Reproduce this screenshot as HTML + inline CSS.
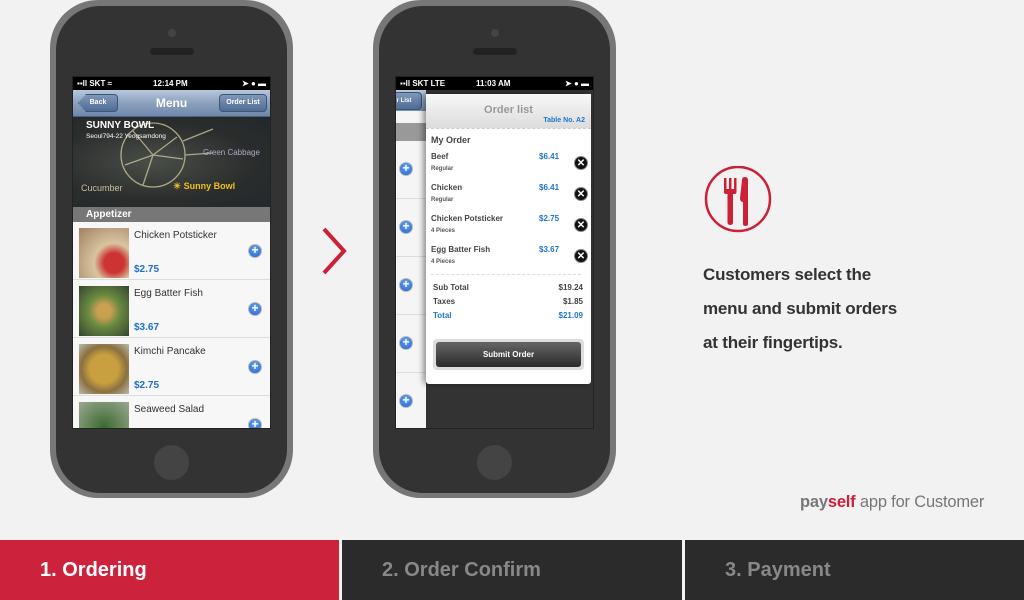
<!DOCTYPE html>
<html><head><meta charset="utf-8"><style>
*{margin:0;padding:0;box-sizing:border-box}
body{width:1024px;height:600px;background:#f2f2f2;position:relative;overflow:hidden;font-family:"Liberation Sans",sans-serif}
.abs{position:absolute}
.phone{position:absolute;top:0;width:243px;height:498px;background:#777;border-radius:48px}
.phone .in{position:absolute;left:6px;top:-6px;right:6px;bottom:5px;background:#333;border-radius:44px}
.cam{position:absolute;width:8px;height:8px;border-radius:50%;background:#444;left:118px;top:29px}
.spk{position:absolute;width:44px;height:7px;border-radius:4px;background:#222;left:100px;top:48px}
.home{position:absolute;width:35px;height:35px;border-radius:50%;background:#444;left:104px;top:445px}
.screen{position:absolute;left:22px;top:76px;width:199px;height:353px;background:#fff;overflow:hidden;border:1px solid #222}
.sb{position:absolute;left:0;top:0;width:100%;height:13px;background:#000;color:#fff;font-size:8px;font-weight:bold;line-height:13px}
.nav{position:absolute;left:0;top:13px;width:100%;height:27px;background:linear-gradient(#b7c7dc,#8ba0bd 50%,#6f88aa);border-bottom:1px solid #4c5f7c}
.btn{position:absolute;top:4px;height:18px;border-radius:4px;background:linear-gradient(#7f97b8,#4f6c94);border:1px solid #3d5476;color:#fff;font-size:7px;font-weight:bold;text-align:center;line-height:16px}
.row{position:absolute;left:0;width:100%;height:58px;border-bottom:1px solid #ddd;background:#f7f7f7}
.row .img{position:absolute;left:6px;top:6px;width:50px;height:50px}
.row .t{position:absolute;left:61px;top:8px;font-size:10px;color:#333}
.row .p{position:absolute;left:61px;top:42px;font-size:10px;color:#1e6fcf;font-weight:bold}
.plus{position:absolute;width:14px;height:14px;border-radius:50%;background:radial-gradient(circle at 50% 35%,#6aa6f0,#1f62d0);border:1px solid #bbb;color:#fff;font-size:12px;line-height:11px;text-align:center;font-weight:bold}
.x{position:absolute;left:148px;width:14px;height:14px;border-radius:50%;background:#111;color:#fff;font-size:10px;line-height:14px;text-align:center;font-weight:bold;border:1px solid #888}
.it{position:absolute;left:5px;font-size:8px;color:#444;font-weight:bold}
.sub{position:absolute;left:5px;font-size:6px;color:#555;font-weight:bold}
.pr{position:absolute;left:113px;font-size:8px;color:#1e74d0;font-weight:bold}
.tab{position:absolute;top:540px;height:60px;font-size:20px;font-weight:bold;line-height:60px;padding-left:40px}
</style></head><body>

<div class="phone" style="left:50px">
<div class="in" style="top:6px"></div>
<div class="cam"></div><div class="spk"></div><div class="home"></div>
<div class="screen">
 <div class="sb"><span style="position:absolute;left:4px">▪▪ll SKT ≈</span><span style="position:absolute;left:80px">12:14 PM</span><span style="position:absolute;right:4px">➤ ● ▬</span></div>
 <div class="nav">
  <div class="btn" style="left:5px;width:40px;clip-path:polygon(8px 0,100% 0,100% 100%,8px 100%,0 50%)">Back</div>
  <div style="position:absolute;left:0;width:100%;text-align:center;color:#fff;font-size:12px;font-weight:bold;line-height:26px">Menu</div>
  <div class="btn" style="right:3px;width:48px">Order List</div>
 </div>
 <div class="abs" style="left:0;top:40px;width:199px;height:90px;background:radial-gradient(ellipse at 40% 50%,#4a4e48,#2a2d2c 60%,#22282b)">
  <svg width="199" height="90" class="abs" style="left:0;top:0"><g fill="none" stroke="#c8c29a" stroke-width="1.3" opacity=".8"><circle cx="80" cy="38" r="32"/><path d="M80 38L60 14M80 38L104 20M80 38L110 42M80 38L70 68M80 38L52 48"/><path d="M110 24L140 12M112 38L140 36"/></g>
  <text x="100" y="72" fill="#f0c020" font-size="9" font-weight="bold" font-family="Liberation Sans">☀ Sunny Bowl</text>
  <text x="8" y="74" fill="#c8c29a" font-size="9" font-family="Liberation Sans">Cucumber</text>
  <text x="130" y="38" fill="#aac" font-size="8" font-family="Liberation Sans">Green Cabbage</text></svg>
  <div class="abs" style="left:13px;top:3px;color:#fff;font-size:10px;font-weight:bold">SUNNY BOWL</div>
  <div class="abs" style="left:13px;top:16px;color:#fff;font-size:6.5px">Seoul794-22 Yeogsamdong</div>
 </div>
 <div class="abs" style="left:0;top:130px;width:100%;height:15px;background:#777;color:#fff;font-size:10px;font-weight:bold;line-height:15px;padding-left:13px">Appetizer</div>
 <div class="row" style="top:145px"><div class="img" style="background:radial-gradient(circle at 70% 70%,#c33 20%,#d8c5a0 40%,#a08060)"></div><div class="t">Chicken Potsticker</div><div class="p">$2.75</div><div class="plus" style="left:175px;top:22px">+</div></div>
 <div class="row" style="top:203px"><div class="img" style="background:radial-gradient(circle,#c9a050 20%,#6a8a40 45%,#354530)"></div><div class="t">Egg Batter Fish</div><div class="p">$3.67</div><div class="plus" style="left:175px;top:22px">+</div></div>
 <div class="row" style="top:261px"><div class="img" style="background:radial-gradient(circle,#c9a040 40%,#8a7040 65%,#bba)"></div><div class="t">Kimchi Pancake</div><div class="p">$2.75</div><div class="plus" style="left:175px;top:22px">+</div></div>
 <div class="row" style="top:319px"><div class="img" style="background:radial-gradient(circle,#3a6a30,#9aa890)"></div><div class="t">Seaweed Salad</div><div class="plus" style="left:175px;top:22px">+</div></div>
</div>
</div>

<svg class="abs" style="left:318px;top:226px" width="32" height="50"><path d="M6 3L26 25L6 47" fill="none" stroke="#cc2038" stroke-width="4"/></svg>

<div class="phone" style="left:373px">
<div class="in" style="top:6px"></div>
<div class="cam"></div><div class="spk"></div><div class="home"></div>
<div class="screen" style="background:#333">
 <div class="sb"><span style="position:absolute;left:4px">▪▪ll SKT LTE</span><span style="position:absolute;left:80px">11:03 AM</span><span style="position:absolute;right:4px">➤ ● ▬</span></div>
 <div class="abs" style="left:0;top:13px;width:30px;height:340px;background:#f5f5f5">
  <div class="abs" style="left:0;top:0;width:30px;height:21px;background:linear-gradient(#b7c7dc,#7890b0)"><div class="btn" style="left:-10px;top:2px;width:36px;font-size:6px">r List</div></div>
  <div class="abs" style="left:0;top:33px;width:30px;height:18px;background:#999"></div>
  <div class="plus" style="left:3px;top:72px">+</div><div class="abs" style="left:0;top:108px;width:30px;border-top:1px solid #ddd"></div>
  <div class="plus" style="left:3px;top:130px">+</div><div class="abs" style="left:0;top:166px;width:30px;border-top:1px solid #ddd"></div>
  <div class="plus" style="left:3px;top:188px">+</div><div class="abs" style="left:0;top:224px;width:30px;border-top:1px solid #ddd"></div>
  <div class="plus" style="left:3px;top:246px">+</div><div class="abs" style="left:0;top:282px;width:30px;border-top:1px solid #ddd"></div>
  <div class="plus" style="left:3px;top:304px">+</div>
 </div>
 <div class="abs" style="left:30px;top:17px;width:165px;height:290px;background:#fff;border-radius:3px;box-shadow:-3px 0 6px rgba(0,0,0,.4)">
  <div class="abs" style="left:0;top:0;width:100%;height:35px;background:linear-gradient(#f8f8f8,#dcdcdc);border-bottom:1px dashed #ccc">
   <div class="abs" style="left:0;width:100%;text-align:center;top:10px;color:#999;font-size:11px;font-weight:bold">Order list</div>
   <div class="abs" style="right:6px;top:23px;color:#1e74d0;font-size:7px;font-weight:bold">Table No. A2</div>
  </div>
  <div class="abs" style="left:5px;top:41px;font-size:9px;color:#444;font-weight:bold">My Order</div>
  <div class="it" style="top:58px">Beef</div><div class="pr" style="top:58px">$6.41</div><div class="sub" style="top:72px">Regular</div><div class="x" style="top:62px">✕</div>
  <div class="it" style="top:89px">Chicken</div><div class="pr" style="top:89px">$6.41</div><div class="sub" style="top:103px">Regular</div><div class="x" style="top:93px">✕</div>
  <div class="it" style="top:120px">Chicken Potsticker</div><div class="pr" style="top:120px">$2.75</div><div class="sub" style="top:134px">4 Pieces</div><div class="x" style="top:124px">✕</div>
  <div class="it" style="top:151px">Egg Batter Fish</div><div class="pr" style="top:151px">$3.67</div><div class="sub" style="top:165px">4 Pieces</div><div class="x" style="top:155px">✕</div>
  <div class="abs" style="left:5px;top:180px;width:150px;border-top:1px dashed #ddd"></div>
  <div class="abs" style="left:7px;top:189px;width:150px;font-size:8px;color:#444;font-weight:bold">Sub Total<span style="float:right">$19.24</span></div>
  <div class="abs" style="left:7px;top:203px;width:150px;font-size:8px;color:#444;font-weight:bold">Taxes<span style="float:right">$1.85</span></div>
  <div class="abs" style="left:7px;top:217px;width:150px;font-size:8px;color:#1e74d0;font-weight:bold">Total<span style="float:right">$21.09</span></div>
  <div class="abs" style="left:7px;top:245px;width:151px;height:31px;background:#ddd;border-radius:4px"></div>
  <div class="abs" style="left:10px;top:248px;width:145px;height:25px;background:linear-gradient(#666,#2a2a2a);border-radius:3px;color:#fff;font-size:8px;font-weight:bold;text-align:center;line-height:25px">Submit Order</div>
 </div>
</div>
</div>

<svg class="abs" style="left:704px;top:166px" width="68" height="68"><circle cx="34" cy="33" r="32" fill="none" stroke="#cc2038" stroke-width="2.5"/>
<g fill="#cc2038"><rect x="20" y="12" width="2.5" height="13"/><rect x="25" y="12" width="2.5" height="13"/><rect x="30" y="12" width="2.5" height="13"/><rect x="20" y="23" width="12.5" height="5" rx="2"/><rect x="23.5" y="25" width="5.5" height="34" rx="2.5"/>
<path d="M38 14Q38 11 41 11Q44 11 44 14L44 58Q44 60 41.5 60Q39 60 39 58L39 36Q36 36 36 32Z"/></g></svg>

<div class="abs" style="left:703px;top:258px;font-size:17px;color:#333;line-height:34px;font-weight:bold;letter-spacing:-0.2px">Customers select the<br>menu and submit orders<br>at their fingertips.</div>

<div class="abs" style="left:800px;top:493px;font-size:16.5px;color:#777;letter-spacing:-0.2px"><b>pay</b><b style="color:#cc2038">self</b> app for Customer</div>

<div class="tab" style="left:0;width:339px;background:#cc223b;color:#fff">1. Ordering</div>
<div class="tab" style="left:342px;width:340px;background:#2b2b2b;color:#888">2. Order Confirm</div>
<div class="tab" style="left:685px;width:339px;background:#2b2b2b;color:#888">3. Payment</div>
</body></html>
